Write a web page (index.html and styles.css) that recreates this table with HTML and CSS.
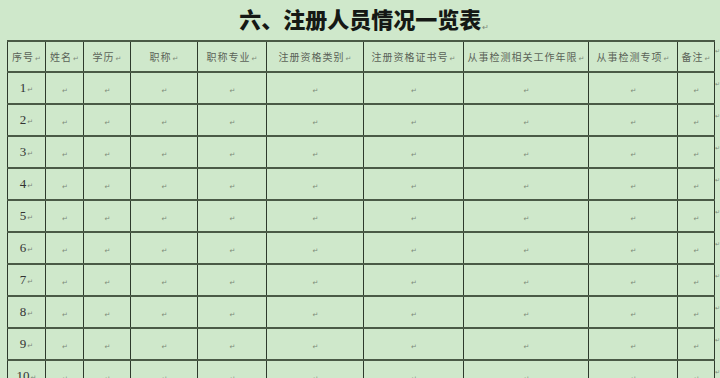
FILE: index.html
```html
<!DOCTYPE html>
<html lang="zh">
<head>
<meta charset="utf-8">
<link rel="stylesheet" href="styles.css">
</head>
<body>
<div class="page">
  <h1 class="title">六、注册人员情况一览表<span class="pm pm-title">↵</span></h1>
  <table class="grid">
    <colgroup>
      <col style="width:38px"><col style="width:38px"><col style="width:47px"><col style="width:67px"><col style="width:69px"><col style="width:97px"><col style="width:100px"><col style="width:125px"><col style="width:89px"><col style="width:37px"><col style="width:5px">
    </colgroup>
    <thead>
      <tr class="head">
        <th>序号<span class="pm">↵</span></th>
        <th>姓名<span class="pm">↵</span></th>
        <th>学历<span class="pm">↵</span></th>
        <th>职称<span class="pm">↵</span></th>
        <th>职称专业<span class="pm">↵</span></th>
        <th>注册资格类别<span class="pm">↵</span></th>
        <th>注册资格证书号<span class="pm">↵</span></th>
        <th>从事检测相关工作年限<span class="pm">↵</span></th>
        <th>从事检测专项<span class="pm">↵</span></th>
        <th>备注<span class="pm">↵</span></th>
        <th class="end"><span class="pm">↵</span></th>
      </tr>
    </thead>
    <tbody id="rows"></tbody>
  </table>
</div>
<script src="app.js"></script>
</body>
</html>
```

FILE: app.js
```js
var body = document.getElementById('rows');
var html = '';
for (var i = 1; i <= 10; i++) {
  html += '<tr class="row"><td class="num">' + i + '<span class="pm">↵</span></td>';
  for (var c = 0; c < 9; c++) html += '<td><span class="pm">↵</span></td>';
  html += '<td class="end"><span class="pm">↵</span></td></tr>';
}
body.innerHTML = html;
```

FILE: styles.css
```css
html, body {
  margin: 0;
  padding: 0;
  background: #cfe8cb;
}
.page {
  width: 720px;
  height: 378px;
  overflow: hidden;
  background: #cfe8cb;
}
.title {
  margin: 0;
  height: 40px;
  line-height: 36px;
  text-align: center;
  font-family: "Noto Sans CJK SC", sans-serif;
  font-weight: 900;
  font-size: 22px;
  color: #151815;
  padding-left: 8px;
}
.pm {
  font-family: "DejaVu Sans", sans-serif;
  font-size: 7px;
  font-weight: 400;
  letter-spacing: 0;
  color: #7d8a7a;
  margin-left: 1px;
}
.pm-title {
  font-size: 8px;
  vertical-align: -2px;
}
.grid {
  margin-left: 7px;
  border-collapse: collapse;
  table-layout: fixed;
  width: 712px;
}
.grid th, .grid td {
  padding: 0;
  text-align: center;
  vertical-align: middle;
  border-left: 1px solid #2e3a2c;
  border-right: 1px solid #2e3a2c;
  border-top: 2px solid #4a5a46;
  border-bottom: 2px solid #4a5a46;
}
.head th {
  height: 29px;
  font-family: "Noto Sans CJK SC", sans-serif;
  font-weight: 400;
  font-size: 10px;
  letter-spacing: 1px;
  color: #5b6358;
  white-space: nowrap;
}
.row td {
  height: 30px;
}
.num {
  font-family: "Liberation Serif", serif;
  font-size: 13px;
  color: #333;
}
.grid .end {
  border: none;
  border-left: 1px solid #2e3a2c;
  vertical-align: top;
  text-align: left;
  overflow: hidden;
}
.end .pm {
  font-size: 6px;
  margin-left: 0;
}
```
